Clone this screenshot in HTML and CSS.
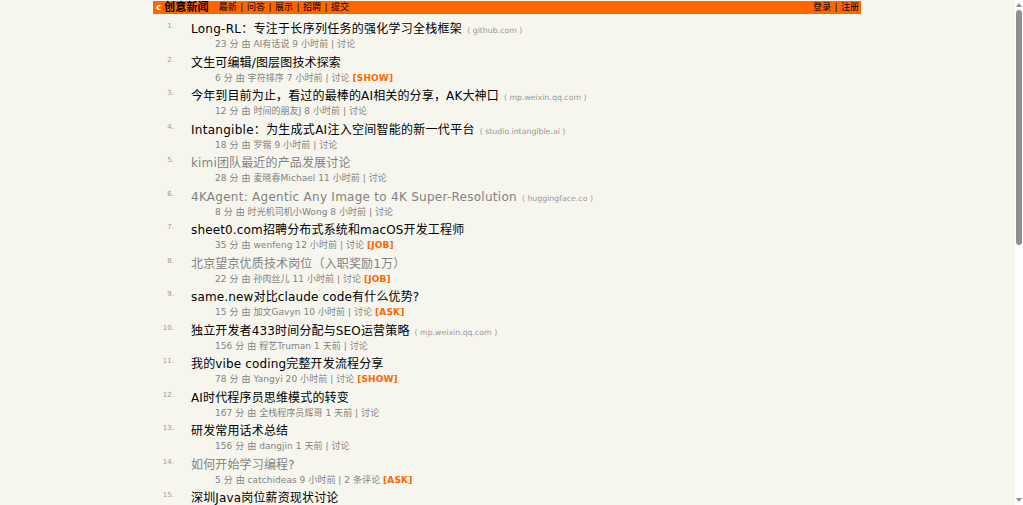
FILE: index.html
```html
<!DOCTYPE html>
<html lang="zh">
<head>
<meta charset="utf-8">
<title>创意新闻</title>
<link rel="stylesheet" href="styles.css">
</head>
<body>
<div class="viewport">
  <main class="page">
    <header class="topbar">
      <div class="nav-left">
        <span class="logo">c</span>
        <b class="brand">创意新闻</b>
        <nav class="links"><a>最新</a><i>|</i><a>问答</a><i>|</i><a>展示</a><i>|</i><a>招聘</a><i>|</i><a>提交</a></nav>
      </div>
      <nav class="links auth"><a>登录</a><i>|</i><a>注册</a></nav>
    </header>
    <ol class="stories">
      <li class="story"><span class="rank">1.</span><div class="body"><div class="title wide">Long-RL：专注于长序列任务的强化学习全栈框架<span class="site">( github.com )</span></div><div class="sub">23 分 由 AI有话说 9 小时前 | 讨论</div></div></li>
      <li class="story"><span class="rank">2.</span><div class="body"><div class="title">文生可编辑/图层图技术探索</div><div class="sub">6 分 由 字符排序 7 小时前 | 讨论 <b class="tag">[SHOW]</b></div></div></li>
      <li class="story"><span class="rank">3.</span><div class="body"><div class="title">今年到目前为止，看过的最棒的AI相关的分享，AK大神口<span class="site">( mp.weixin.qq.com )</span></div><div class="sub">12 分 由 时间的朋友J 8 小时前 | 讨论</div></div></li>
      <li class="story"><span class="rank">4.</span><div class="body"><div class="title wide">Intangible：为生成式AI注入空间智能的新一代平台<span class="site">( studio.intangible.ai )</span></div><div class="sub">18 分 由 罗锴 9 小时前 | 讨论</div></div></li>
      <li class="story visited"><span class="rank">5.</span><div class="body"><div class="title">kimi团队最近的产品发展讨论</div><div class="sub">28 分 由 麦晓春Michael 11 小时前 | 讨论</div></div></li>
      <li class="story visited"><span class="rank">6.</span><div class="body"><div class="title wide">4KAgent: Agentic Any Image to 4K Super-Resolution<span class="site">( huggingface.co )</span></div><div class="sub">8 分 由 时光机司机小Wong 8 小时前 | 讨论</div></div></li>
      <li class="story"><span class="rank">7.</span><div class="body"><div class="title">sheet0.com招聘分布式系统和macOS开发工程师</div><div class="sub">35 分 由 wenfeng 12 小时前 | 讨论 <b class="tag">[JOB]</b></div></div></li>
      <li class="story visited"><span class="rank">8.</span><div class="body"><div class="title">北京望京优质技术岗位（入职奖励1万）</div><div class="sub">22 分 由 孙肉丝儿 11 小时前 | 讨论 <b class="tag">[JOB]</b></div></div></li>
      <li class="story"><span class="rank">9.</span><div class="body"><div class="title">same.new对比claude code有什么优势?</div><div class="sub">15 分 由 加文Gavyn 10 小时前 | 讨论 <b class="tag">[ASK]</b></div></div></li>
      <li class="story"><span class="rank">10.</span><div class="body"><div class="title">独立开发者433时间分配与SEO运营策略<span class="site">( mp.weixin.qq.com )</span></div><div class="sub">156 分 由 程艺Truman 1 天前 | 讨论</div></div></li>
      <li class="story"><span class="rank">11.</span><div class="body"><div class="title">我的vibe coding完整开发流程分享</div><div class="sub">78 分 由 Yangyi 20 小时前 | 讨论 <b class="tag">[SHOW]</b></div></div></li>
      <li class="story"><span class="rank">12.</span><div class="body"><div class="title">AI时代程序员思维模式的转变</div><div class="sub">167 分 由 全栈程序员辉哥 1 天前 | 讨论</div></div></li>
      <li class="story"><span class="rank">13.</span><div class="body"><div class="title">研发常用话术总结</div><div class="sub">156 分 由 dangjin 1 天前 | 讨论</div></div></li>
      <li class="story visited"><span class="rank">14.</span><div class="body"><div class="title">如何开始学习编程?</div><div class="sub">5 分 由 catchideas 9 小时前 | 2 条评论 <b class="tag">[ASK]</b></div></div></li>
      <li class="story"><span class="rank">15.</span><div class="body"><div class="title">深圳Java岗位薪资现状讨论</div></div></li>
    </ol>
  </main>
  <aside class="scrollbar" aria-hidden="true">
    <span class="arrow up"></span>
    <span class="thumb"></span>
    <span class="arrow down"></span>
  </aside>
</div>
</body>
</html>
```
FILE: styles.css
```css
* { box-sizing: border-box; }
html, body { margin: 0; height: 100%; overflow: hidden; }
body {
  background: #f6f6ef;
  font-family: "DejaVu Sans", "Noto Sans CJK SC", sans-serif;
  color: #000;
}
.viewport { display: flex; height: 505px; }
.page { flex: 1; min-width: 0; overflow: hidden; padding: 1px 154px 0 153px; }
.topbar {
  display: flex; justify-content: space-between; align-items: center;
  height: 13px; background: #ff6600; padding: 0 2px;
}
.nav-left { display: flex; align-items: center; }
.logo {
  width: 7px; height: 9px; margin-right: 2px;
  color: #fff; font-size: 8px; line-height: 9px; text-align: center; font-weight: 700;
}
.brand { font-size: 11px; line-height: 13px; margin-right: 10px; letter-spacing: 0.2px; }
.links { display: flex; font-size: 9px; line-height: 13px; }
.links i { font-style: normal; margin: 0 3.5px; }
.stories { list-style: none; margin: 0; padding: 5px 0 0 0; }
.story { display: flex; height: 33.5px; }
.rank { width: 38px; flex: none; padding: 3px 17px 0 0; text-align: right; font-size: 7px; line-height: 8px; color: #999; }
.title { height: 20px; font-size: 12px; line-height: 20px; letter-spacing: 0.15px; white-space: nowrap; color: #000; }
.title.wide { letter-spacing: 0.27px; }
.visited .title { color: #828282; }
.site { font-size: 7.8px; line-height: 1; letter-spacing: 0; color: #999; margin-left: 5px; }
.sub { font-size: 9px; line-height: 10px; letter-spacing: 0.05px; color: #828282; padding-left: 24px; white-space: nowrap; }
.tag { color: #ff6600; font-weight: 700; letter-spacing: 0.15px; }
.scrollbar {
  flex: none; width: 8px; background: #fdfdfd; position: relative;
  display: flex; flex-direction: column; align-items: center; justify-content: space-between; padding: 3px 0;
}
.thumb { position: absolute; top: 10px; left: 1px; width: 6px; height: 235px; background: #8f8f8f; border-radius: 3px; }
.arrow { width: 0; height: 0; border-left: 3px solid transparent; border-right: 3px solid transparent; }
.arrow.up { border-bottom: 4px solid #8f8f8f; }
.arrow.down { border-top: 4px solid #8f8f8f; }
```
